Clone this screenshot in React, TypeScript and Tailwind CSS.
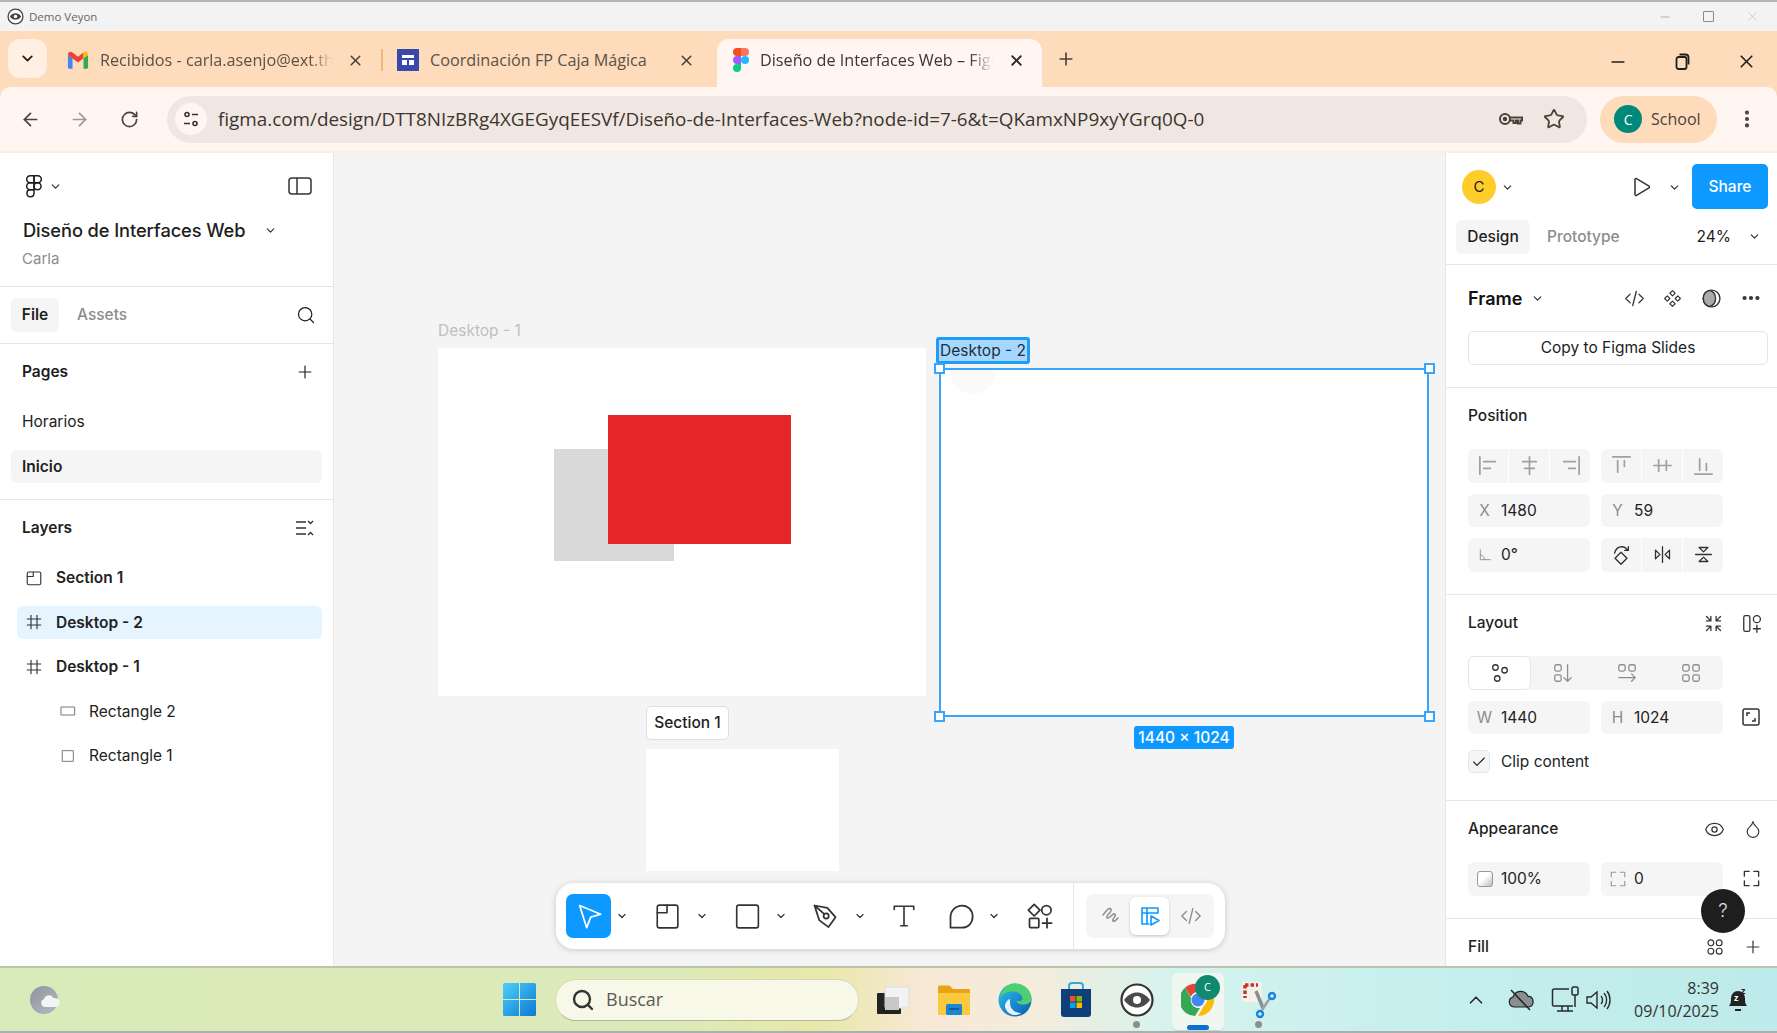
import React from "react";
import { ArrowLeft, ArrowRight, ChevronDown, ChevronUp, EllipsisVertical, Plus, RotateCw, Search, Star, X, Minus, Check, Eye, Droplet, Ellipsis } from "lucide-react";

const inter = "font-['Inter',sans-serif]";
const chrome = "font-['Open_Sans','Noto_Sans',sans-serif]";

type IcoProps = { size?: number; className?: string; sw?: number; children: React.ReactNode };

function Ico({ size = 24, className = "", sw = 1.5, children }: IcoProps) {
  return (
    <svg width={size} height={size} viewBox="0 0 24 24" fill="none" stroke="currentColor" strokeWidth={sw} strokeLinecap="round" strokeLinejoin="round" className={`shrink-0 ${className}`}>
      {children}
    </svg>
  );
}

function Caret({ className = "" }: { className?: string }) {
  return <ChevronDown size={13} strokeWidth={2.2} className={`shrink-0 text-[#333] ${className}`} />;
}

function GmailIcon() {
  return (
    <svg width="22" height="22" viewBox="0 0 24 24" className="shrink-0">
      <path d="M1 6.5V20a1.5 1.5 0 0 0 1.5 1.5H6V10z" fill="#4285f4" />
      <path d="M23 6.5V20a1.5 1.5 0 0 1-1.5 1.5H18V10z" fill="#34a853" />
      <path d="M1 6.5C1 3.5 4 2.2 6 3.8l6 4.7 6-4.7V10l-6 4.6L1 6.5z" fill="#ea4335" />
      <path d="M18 3.8c2-1.6 5-.3 5 2.7L18 10z" fill="#fbbc04" />
    </svg>
  );
}

function CalendarIcon() {
  return (
    <svg width="22" height="22" viewBox="0 0 22 22" className="shrink-0">
      <rect width="22" height="22" fill="#3949ab" />
      <rect x="5" y="6" width="12" height="3" fill="#fff" />
      <rect x="5" y="11" width="5" height="5" fill="#fff" />
      <rect x="12" y="11" width="5" height="5" fill="#fff" />
    </svg>
  );
}

function FigmaColor() {
  return (
    <svg width="16" height="24" viewBox="0 0 16 24" className="shrink-0">
      <path d="M8 0H4a4 4 0 0 0 0 8h4z" fill="#f24e1e" />
      <path d="M8 0h4a4 4 0 0 1 0 8H8z" fill="#ff7262" />
      <path d="M8 8H4a4 4 0 0 0 0 8h4z" fill="#a259ff" />
      <circle cx="12" cy="12" r="4" fill="#1abcfe" />
      <path d="M8 16H4a4 4 0 1 0 4 4z" fill="#0acf83" />
    </svg>
  );
}

function FigmaOutline() {
  return (
    <Ico size={26} sw={1.4}>
      <path d="M8.5 2.5H12v6.5H8.5a3.25 3.25 0 0 1 0-6.500z" />
      <path d="M12 2.500h3.500a3.250 3.250 0 0 1 0 6.500H12z" />
      <path d="M8.500 9H12v6.500H8.500a3.250 3.250 0 0 1 0-6.500z" />
      <circle cx="15.250" cy="12.250" r="3.250" />
      <path d="M8.500 15.500H12v3.250a3.250 3.250 0 1 1-3.500-3.250z" />
    </Ico>
  );
}

function Tab({ icon, title, active, width }: { icon: React.ReactNode; title: string; active?: boolean; width: string }) {
  return (
    <div className={`relative flex h-[48px] items-center pb-[6px] ${width} ${active ? "rounded-t-[12px] bg-[#fff6f2] pl-[16px]" : "pl-[20px]"}`}>
      {icon}
      <span className={`ml-[11px] w-[233px] overflow-hidden whitespace-nowrap text-[16.200px] [mask-image:linear-gradient(to_right,black_90%,transparent)] ${active ? "text-[#3d3530]" : "text-[#5c5148]"}`}>{title}</span>
    </div>
  );
}

function TitleBar() {
  return (
    <div className={`flex h-[31px] items-center border-t-2 border-[#b5b5b5] bg-[#f3f3f3] pl-[7px] pr-[17px] ${chrome}`}>
      <svg width="17" height="17" viewBox="0 0 24 24" className="shrink-0">
        <circle cx="12" cy="12" r="10.500" fill="#fff" stroke="#444" strokeWidth="1.800" />
        <path d="M4 12c4-6 12-6 16 0-4 6-12 6-16 0z" fill="#444" />
        <circle cx="12" cy="12" r="2.500" fill="#fff" />
      </svg>
      <span className="ml-[5px] text-[11.500px] text-[#666]">Demo Veyon</span>
      <div className="ml-auto flex items-center gap-[31px] text-[#9a9a9a]">
        <Minus size={14} strokeWidth={1.2} />
        <div className="h-[11px] w-[11px] rounded-[1px] border border-[#888]" />
        <X size={15} strokeWidth={1} className="text-[#bbb]" />
      </div>
    </div>
  );
}

function TabStrip() {
  return (
    <div className={`flex h-[56px] items-end bg-[#fddbbb] pl-[8px] ${chrome}`}>
      <div className="mb-[9px] flex h-[39px] w-[39px] items-center justify-center rounded-[12px] bg-[#fff0e3]">
        <ChevronDown size={17} strokeWidth={2.6} className="text-[#222]" />
      </div>
      <div className="relative flex w-[335px] items-center">
        <Tab icon={<GmailIcon />} title="Recibidos - carla.asenjo@ext.the" width="w-[335px]" />
        <X size={17} strokeWidth={2.2} className="absolute left-[300px] top-[13px] text-[#4d423a]" />
        <div className="absolute left-[334px] top-[10px] h-[22px] w-[2px] bg-[#f0b67c]" />
      </div>
      <div className="relative flex w-[335px] items-center">
        <div className="relative flex h-[48px] items-center pb-[6px] pl-[15px]">
          <CalendarIcon />
          <span className="ml-[11px] whitespace-nowrap text-[16.200px] text-[#5c5148]">Coordinación FP Caja Mágica</span>
        </div>
        <X size={17} strokeWidth={2.2} className="absolute left-[296px] top-[13px] text-[#4d423a]" />
      </div>
      <div className="relative">
        <Tab active icon={<FigmaColor />} title="Diseño de Interfaces Web – Figma" width="w-[325px]" />
        <X size={17} strokeWidth={2.6} className="absolute left-[291px] top-[13px] text-[#2a2a2a]" />
      </div>
      <Plus size={20} strokeWidth={2} className="mb-[18px] ml-[14px] text-[#4d423a]" />
      <div className="mb-[15px] ml-auto flex items-center gap-[44px] pr-[20px] text-[#1e1e1e]">
        <Minus size={20} strokeWidth={2} />
        <svg width="20" height="20" viewBox="0 0 20 20" fill="none" stroke="currentColor" strokeWidth="1.800">
          <rect x="4.500" y="5" width="10" height="12" rx="2" />
          <path d="M7.500 2.500h6a3 3 0 0 1 3 3v7" />
        </svg>
        <X size={21} strokeWidth={1.9} />
      </div>
    </div>
  );
}

function AddressBar() {
  return (
    <div className={`flex h-[64px] items-center rounded-tl-[10px] rounded-tr-[10px] bg-[#fff6f2] pl-[20px] pr-[19px] ${chrome}`}>
      <ArrowLeft size={21} strokeWidth={2} className="text-[#4d423a]" />
      <ArrowRight size={21} strokeWidth={2} className="ml-[28px] text-[#a39890]" />
      <RotateCw size={19} strokeWidth={2.1} className="ml-[30px] text-[#4d423a]" />
      <div className="ml-[28px] flex h-[47px] w-[1421px] items-center rounded-full bg-[#f0e7e2] pl-[8px] pr-[22px]">
        <div className="flex h-[32px] w-[32px] items-center justify-center rounded-full bg-[#fff6f2]">
          <svg width="18" height="18" viewBox="0 0 18 18" fill="none" stroke="#3a322c" strokeWidth="1.600">
            <circle cx="5" cy="4.500" r="2" />
            <path d="M10 4.500h6M2 13.500h6" />
            <circle cx="13" cy="13.500" r="2" />
          </svg>
        </div>
        <span className="ml-[11px] whitespace-nowrap text-[18.870px] text-[#3d3530]">figma.com/design/DTT8NIzBRg4XGEGyqEESVf/Diseño-de-Interfaces-Web?node-id=7-6&amp;t=QKamxNP9xyYGrq0Q-0</span>
        <div className="ml-auto flex items-center gap-[19px] text-[#4d423a]">
          <svg width="26" height="22" viewBox="0 0 26 22" fill="none" stroke="currentColor" strokeWidth="2">
            <circle cx="7" cy="11" r="5" />
            <circle cx="7" cy="11" r="1.200" fill="currentColor" />
            <path d="M12 9.500h12v3h-1.500v3h-2.500v-3h-2v2.500h-2.500v-2.500H12" />
          </svg>
          <Star size={22} strokeWidth={2} />
        </div>
      </div>
      <div className="ml-[13px] flex h-[47px] w-[117px] items-center rounded-full bg-[#fddbbb] pl-[14px]">
        <div className="flex h-[28px] w-[28px] items-center justify-center rounded-full bg-[#00897b] text-[14px] text-white">C</div>
        <span className="ml-[9px] text-[16px] text-[#4d423a]">School</span>
      </div>
      <EllipsisVertical size={22} strokeWidth={2.6} className="ml-[19px] text-[#4d423a]" />
    </div>
  );
}

function LayerRow({ icon, label, active, indent }: { icon: React.ReactNode; label: string; active?: boolean; indent?: boolean }) {
  return (
    <div className={`mx-[11px] mb-[11px] ml-[17px] flex h-[33.500px] items-center rounded-[6px] ${active ? "bg-[#e5f4ff]" : ""} ${indent ? "pl-[39px]" : "pl-[5px]"}`}>
      <span className="flex w-[24px] justify-center text-[#333]">{icon}</span>
      <span className={`text-[15.500px] text-[#222] ${indent ? "ml-[9px] font-normal" : "ml-[10px] font-semibold"}`}>{label}</span>
    </div>
  );
}

function LeftPanel() {
  return (
    <div className={`flex w-[334px] shrink-0 flex-col border-r border-[#e6e6e6] bg-white text-[#1e1e1e] ${inter}`}>
      <div className="h-[134px] shrink-0 border-b border-[#e6e6e6] pl-[21px] pr-[21px] pt-[20px]">
        <div className="flex items-center">
          <FigmaOutline />
          <Caret className="ml-[2px]" />
          <svg width="24" height="18" viewBox="0 0 24 18" fill="none" stroke="#333" strokeWidth="1.500" className="ml-auto">
            <rect x="1" y="1" width="22" height="16" rx="3" />
            <path d="M9 1v16" />
          </svg>
        </div>
        <div className="mt-[18px] flex items-center pl-[2px]">
          <span className="text-[18.300px] font-medium tracking-[-0.1px]">Diseño de Interfaces Web</span>
          <Caret className="ml-[19px]" />
        </div>
        <div className="mt-[4px] pl-[1px] text-[15px] text-[#8c8c8c]">Carla</div>
      </div>
      <div className="flex h-[57px] shrink-0 items-center border-b border-[#e6e6e6] pl-[11px] pr-[17px]">
        <div className="flex h-[33.500px] w-[48px] items-center justify-center rounded-[6px] bg-[#f5f5f5] text-[15.500px] font-semibold">File</div>
        <span className="ml-[18px] text-[15.500px] font-medium text-[#8c8c8c]">Assets</span>
        <Search size={20} strokeWidth={1.5} className="ml-auto" />
      </div>
      <div className="h-[156px] shrink-0 border-b border-[#e6e6e6] pt-[16px]">
        <div className="flex h-[24px] items-center pl-[22px] pr-[18px]">
          <span className="text-[15.500px] font-semibold">Pages</span>
          <Plus size={20} strokeWidth={1.4} className="ml-auto" />
        </div>
        <div className="mt-[21px] flex h-[33.500px] items-center pl-[22px] text-[15.500px] text-[#222]">Horarios</div>
        <div className="ml-[11px] mr-[11px] mt-[11px] flex h-[33.500px] items-center rounded-[6px] bg-[#f5f5f5] pl-[11px] text-[15.500px] font-semibold">Inicio</div>
      </div>
      <div className="min-h-0 flex-1 overflow-hidden pt-[16px]">
        <div className="flex h-[24px] items-center pl-[22px] pr-[18px]">
          <span className="text-[15.500px] font-semibold">Layers</span>
          <svg width="20" height="20" viewBox="0 0 20 20" fill="none" stroke="#333" strokeWidth="1.400" className="ml-auto">
            <path d="M1 4h10M1 10h10M1 16h10M13 3l2.500 2.500L18 3M13 17l2.500-2.500L18 17" />
          </svg>
        </div>
        <div className="mt-[21px]">
          <LayerRow label="Section 1" icon={<Ico size={18}><rect x="3" y="4" width="18" height="17" rx="2" /><path d="M3 10h8V4" /></Ico>} />
          <LayerRow active label="Desktop - 2" icon={<Ico size={18}><path d="M8 3v18M16 3v18M3 8h18M3 16h18" /></Ico>} />
          <LayerRow label="Desktop - 1" icon={<Ico size={18}><path d="M8 3v18M16 3v18M3 8h18M3 16h18" /></Ico>} />
          <LayerRow indent label="Rectangle 2" icon={<Ico size={16} className="text-[#777]"><rect x="2" y="6" width="20" height="12" /></Ico>} />
          <LayerRow indent label="Rectangle 1" icon={<Ico size={16} className="text-[#777]"><rect x="4" y="4" width="16" height="16" /></Ico>} />
        </div>
      </div>
    </div>
  );
}

function Handle({ className }: { className: string }) {
  return <div className={`absolute h-[11px] w-[11px] border-2 border-[#38a5fb] bg-white ${className}`} />;
}

function ToolCaret({ className = "" }: { className?: string }) {
  return <ChevronDown size={12} strokeWidth={2.4} className={`shrink-0 text-[#333] ${className}`} />;
}

function Toolbar() {
  return (
    <div className="absolute left-[222px] top-[730px] flex h-[66px] w-[669px] items-center rounded-[18px] bg-white pl-[10px] shadow-[0_1px_6px_rgba(0,0,0,0.18)]">
      <div className="flex h-[44px] w-[45px] shrink-0 items-center justify-center rounded-[7px] bg-[#0d99ff] text-white">
        <Ico size={28} sw={1.500}><path d="M4 3l18 7.500-8.500 2.500L10 22z" /></Ico>
      </div>
      <ToolCaret className="ml-[5px]" />
      <Ico size={26} sw={1.500} className="ml-[26px] text-[#333]"><rect x="3" y="2" width="19" height="21" rx="2" /><path d="M3 9h9V2" /></Ico>
      <ToolCaret className="ml-[16px]" />
      <Ico size={26} sw={1.500} className="ml-[26px] text-[#333]"><rect x="2.500" y="2" width="20" height="21" rx="2" /></Ico>
      <ToolCaret className="ml-[15px]" />
      <Ico size={28} sw={1.500} className="ml-[24px] text-[#333]"><path d="M3 3l11 2 7 8-6 8.500-8-6zM3 3l8 7" /><circle cx="13" cy="12" r="2.200" /></Ico>
      <ToolCaret className="ml-[15px]" />
      <Ico size={26} sw={1.500} className="ml-[25px] text-[#333]"><path d="M3 6V3h18v3M12 3v18M9 21h6" /></Ico>
      <Ico size={28} sw={1.500} className="ml-[30px] text-[#333]"><path d="M3 22v-9a10 10 0 0 1 10-10c5 0 9 4 9 9.500S18 22 13 22z" /></Ico>
      <ToolCaret className="ml-[13px]" />
      <Ico size={28} sw={1.500} className="ml-[26px] text-[#333]"><path d="M7 2l5 5-5 5-5-5z" /><circle cx="17.500" cy="7" r="4" /><rect x="3" y="14" width="8" height="8" rx="1" /><path d="M14 18h8M18 14v8" /></Ico>
      <div className="ml-[19px] h-full w-px shrink-0 bg-[#e6e6e6]" />
      <div className="ml-[12px] flex h-[44px] w-[128px] shrink-0 items-center rounded-[8px] bg-[#f5f5f5] pl-[4px]">
        <span className="flex w-[40px] justify-center text-[#8c8c8c]">
          <Ico size={24} sw={1.500}><path d="M5 11c3-4 6-8 8-6s-6 7-4 9 6-6 8-4-4 6-2 7 3-1 5-3" /></Ico>
        </span>
        <div className="flex h-[38px] w-[39px] items-center justify-center rounded-[6px] bg-white text-[#0d99ff] shadow-[0_1px_3px_rgba(0,0,0,0.2)]">
          <Ico size={24} sw={1.600}><path d="M4 20V4h16v5M4 9h16M9 4v16M4 20h7" /><path d="M13 12l8 4.500-8 4.500z" /></Ico>
        </div>
        <span className="flex w-[44px] justify-center text-[#8c8c8c]">
          <Ico size={22} sw={1.500}><path d="M7 7l-5 5 5 5M17 7l5 5-5 5M14 4l-4 16" /></Ico>
        </span>
      </div>
    </div>
  );
}

function Canvas() {
  return (
    <div className={`relative min-w-0 flex-1 overflow-hidden bg-[#f4f4f4] ${inter}`}>
      <div className="absolute left-[104px] top-[166px] text-[15.500px] text-[#c0c0c0]">Desktop - 1</div>
      <div className="absolute left-[104px] top-[195px] h-[348px] w-[488px] bg-white" />
      <div className="absolute left-[220px] top-[296px] h-[112px] w-[120px] bg-[#d9d9d9]" />
      <div className="absolute left-[274px] top-[262px] h-[129px] w-[183px] bg-[#e62626]" />

      <div className="absolute left-[312px] top-[553px] flex h-[34px] w-[83px] items-center justify-center rounded-[5px] border border-[#dedede] bg-white text-[15.500px] font-medium text-[#222]">Section 1</div>
      <div className="absolute left-[312px] top-[596px] h-[122px] w-[193px] bg-white" />

      <div className="absolute left-[602px] top-[184px] flex h-[27px] w-[94px] items-center justify-center rounded-[3px] border-[3px] border-[#1f9cf4] bg-white">
        <span className="bg-[#a6d8ff] px-[1px] text-[15.500px] leading-[21px] text-[#1f2d3a]">Desktop - 2</span>
      </div>
      <div className="absolute left-[605px] top-[215px] h-[349px] w-[490px] overflow-hidden border-2 border-[#38a5fb] bg-white">
        <div className="absolute left-[9px] top-[-24px] h-[48px] w-[46px] rounded-full bg-[#fafafa]" />
      </div>
      <Handle className="left-[600px] top-[210px]" />
      <Handle className="left-[1090px] top-[210px]" />
      <Handle className="left-[600px] top-[558px]" />
      <Handle className="left-[1090px] top-[558px]" />
      <div className="absolute left-[800px] top-[573px] flex h-[23px] w-[100px] items-center justify-center rounded-[3px] bg-[#0d99ff] text-[15.500px] font-medium text-white">1440 × 1024</div>
      <Toolbar />
    </div>
  );
}

function Section({ title, height, children, right, last }: { title: string; height: string; children?: React.ReactNode; right?: React.ReactNode; last?: boolean }) {
  return (
    <div className={`${height} shrink-0 pl-[22px] pr-[9px] pt-[16px] ${last ? "" : "border-b border-[#e6e6e6]"}`}>
      <div className="flex h-[24px] items-center pr-[5px]">
        <span className="text-[15.500px] font-medium text-[#1e1e1e]">{title}</span>
        {right && <div className="ml-auto flex items-center gap-[18px] text-[#333]">{right}</div>}
      </div>
      {children}
    </div>
  );
}

function Field({ label, value, gray = true }: { label: React.ReactNode; value: string; gray?: boolean }) {
  return (
    <div className="flex h-[33.500px] w-[122px] items-center rounded-[6px] bg-[#f5f5f5]">
      <span className={`flex w-[33px] justify-center text-[15.500px] ${gray ? "text-[#8c8c8c]" : ""}`}>{label}</span>
      <span className="text-[15.500px] text-[#222]">{value}</span>
    </div>
  );
}

function IconGroup({ items, className = "" }: { items: React.ReactNode[]; className?: string }) {
  return (
    <div className="flex h-[33.500px] w-[122px] overflow-hidden rounded-[6px] bg-[#f5f5f5]">
      {items.map((it, i) => (
        <div key={i} className={`flex flex-1 items-center justify-center ${i > 0 ? "border-l border-white" : ""} ${className}`}>{it}</div>
      ))}
    </div>
  );
}

function RightPanel() {
  const a = { size: 23, sw: 1.800 };
  return (
    <div className={`relative flex w-[332px] shrink-0 flex-col overflow-hidden border-l border-[#e6e6e6] bg-white ${inter}`}>
      <div className="h-[112px] shrink-0 border-b border-[#e6e6e6] pr-[9px]">
        <div className="flex h-[56px] items-end pl-[16px]">
          <div className="mb-[5px] flex h-[34px] w-[34px] items-center justify-center rounded-full bg-[#ffcd29] text-[15px] text-[#222]">C</div>
          <Caret className="mb-[15px] ml-[5px]" />
          <Ico size={24} sw={1.500} className="mb-[10px] ml-auto text-[#333]"><path d="M6 4.500v15a1 1 0 0 0 1.500.8l12.500-7.500a1 1 0 0 0 0-1.600L7.500 3.700A1 1 0 0 0 6 4.500z" /></Ico>
          <Caret className="mb-[15px] ml-[15px]" />
          <div className="ml-[11px] flex h-[45px] w-[76px] items-center justify-center rounded-[5px] bg-[#0d99ff] text-[15.500px] font-medium text-white">Share</div>
        </div>
        <div className="mt-[11px] flex items-center pl-[10px]">
          <div className="flex h-[33.500px] w-[74px] items-center justify-center rounded-[6px] bg-[#f5f5f5] text-[15.500px] font-medium text-[#222]">Design</div>
          <span className="ml-[17px] text-[15.500px] font-medium text-[#8c8c8c]">Prototype</span>
          <span className="ml-auto text-[15.500px] text-[#222]">24%</span>
          <Caret className="ml-[17px] mr-[7px]" />
        </div>
      </div>

      <div className="h-[123px] shrink-0 border-b border-[#e6e6e6] pl-[22px] pr-[9px] pt-[21px]">
        <div className="flex h-[24px] items-center pr-[6px]">
          <span className="text-[18px] font-semibold text-[#111]">Frame</span>
          <Caret className="ml-[9px]" />
          <div className="ml-auto flex items-center gap-[17px] text-[#333]">
            <Ico size={21} sw={1.500}><path d="M7 7l-5 5 5 5M17 7l5 5-5 5M14 4l-4 16" /></Ico>
            <Ico size={21} sw={1.300}><path d="M12 3l3 3-3 3-3-3zM12 15l3 3-3 3-3-3zM6 9l3 3-3 3-3-3zM18 9l3 3-3 3-3-3z" /></Ico>
            <svg width="21" height="21" viewBox="0 0 20 20" stroke="#333" strokeWidth="1.300">
              <circle cx="11" cy="10" r="8" fill="none" />
              <path d="M9 2.300a8 8 0 0 0 0 15.400 8 8 0 0 0 0-15.400z" fill="#aaa" />
            </svg>
            <Ellipsis size={22} strokeWidth={2.6} className="ml-[2px]" />
          </div>
        </div>
        <div className="mt-[21px] flex h-[34px] w-[300px] items-center justify-center rounded-[6px] border border-[#e6e6e6] text-[15.500px] text-[#222]">Copy to Figma Slides</div>
      </div>

      <Section title="Position" height="h-[207px]">
        <div className="mt-[21px] flex flex-col gap-[11px]">
          <div className="flex gap-[11px] text-[#a0a0a0]">
            <IconGroup items={[
              <Ico key="a" {...a}><path d="M3 3v18M7 8h12M7 15h7" /></Ico>,
              <Ico key="b" {...a}><path d="M12 3v18M5 8h14M7 15h10" /></Ico>,
              <Ico key="c" {...a}><path d="M21 3v18M5 8h12M10 15h7" /></Ico>,
            ]} />
            <IconGroup items={[
              <Ico key="a" {...a}><path d="M3 3h18M8 7v12M15 7v6" /></Ico>,
              <Ico key="b" {...a}><path d="M3 12h18M8 6v12M16 7v10" /></Ico>,
              <Ico key="c" {...a}><path d="M3 21h18M8 5v12M15 10v7" /></Ico>,
            ]} />
          </div>
          <div className="flex gap-[11px]">
            <Field label="X" value="1480" />
            <Field label="Y" value="59" />
          </div>
          <div className="flex gap-[11px]">
            <Field label={<Ico size={14} sw={1.500}><path d="M4 3v17h17M4 12c4 0 7 3 7 8" /></Ico>} value="0°" />
            <IconGroup className="text-[#333]" items={[
              <Ico key="a" size={22} sw={1.500}><path d="M12 9l6.500 6.500L12 22l-6.500-6.500zM5 10c1-4 4-7 8-7s5 2 6 4M20 3v4h-4" /></Ico>,
              <Ico key="b" size={21} sw={1.500}><path d="M12 3v18M4 7v10l5-5zM20 7v10l-5-5z" /></Ico>,
              <Ico key="c" size={21} sw={1.500}><path d="M3 12h18M7 4h10l-5 5zM7 20h10l-5-5z" /></Ico>,
            ]} />
          </div>
        </div>
      </Section>

      <Section title="Layout" height="h-[206px]" right={<>
        <Ico size={21} sw={1.500}><path d="M9 4v5H4M4 4l5 5M15 4v5h5M20 4l-5 5M9 20v-5H4M4 20l5-5M15 20v-5h5M20 20l-5-5" /></Ico>
        <Ico size={21} sw={1.500}><rect x="2" y="3" width="7" height="18" rx="2" /><circle cx="17" cy="7" r="4" /><path d="M17 14v8M13 18h8" /></Ico>
      </>}>
        <div className="mt-[21px] flex h-[33.500px] w-[255px] rounded-[6px] bg-[#f5f5f5] text-[#8c8c8c]">
          <div className="flex w-[63px] items-center justify-center rounded-[6px] border border-[#e6e6e6] bg-white text-[#333]">
            <Ico size={22} sw={1.400}><circle cx="7" cy="6" r="3" /><circle cx="17" cy="9" r="3" /><circle cx="9" cy="18" r="3" /></Ico>
          </div>
          <div className="flex w-[64px] items-center justify-center">
            <Ico size={22} sw={1.400}><rect x="3" y="3" width="7" height="7" rx="2" /><rect x="3" y="14" width="7" height="7" rx="2" /><path d="M17 3v18M13 17l4 4 4-4" /></Ico>
          </div>
          <div className="flex w-[64px] items-center justify-center">
            <Ico size={22} sw={1.400}><rect x="3" y="3" width="7" height="7" rx="2" /><rect x="14" y="3" width="7" height="7" rx="2" /><path d="M3 17h18M17 13l4 4-4 4" /></Ico>
          </div>
          <div className="flex w-[64px] items-center justify-center">
            <Ico size={22} sw={1.400}><rect x="3" y="3" width="7" height="7" rx="2" /><rect x="14" y="3" width="7" height="7" rx="2" /><rect x="3" y="14" width="7" height="7" rx="2" /><rect x="14" y="14" width="7" height="7" rx="2" /></Ico>
          </div>
        </div>
        <div className="mt-[11px] flex items-center gap-[11px]">
          <Field label="W" value="1440" />
          <Field label="H" value="1024" />
          <svg width="18" height="18" viewBox="0 0 18 18" fill="none" stroke="#333" strokeWidth="1.500" className="ml-[8px]">
            <rect x="1" y="1" width="16" height="16" rx="2" />
            <path d="M5 8V5h3M13 10v3h-3" />
          </svg>
        </div>
        <div className="mt-[16px] flex items-center">
          <div className="flex h-[23px] w-[22px] items-center justify-center rounded-[5px] border border-[#e6e6e6] bg-[#f5f5f5]">
            <Check size={16} strokeWidth={1.700} className="text-[#222]" />
          </div>
          <span className="ml-[11px] text-[15.500px] text-[#222]">Clip content</span>
        </div>
      </Section>

      <Section title="Appearance" height="h-[118px]" right={<>
        <Eye size={21} strokeWidth={1.400} />
        <Droplet size={20} strokeWidth={1.400} />
      </>}>
        <div className="mt-[21px] flex items-center gap-[11px]">
          <Field gray={false} label={<span className="h-[16px] w-[16px] rounded-[3px] border border-[#999] bg-[linear-gradient(135deg,#fff_45%,#bbb)]" />} value="100%" />
          <Field gray={false} label={<Ico size={18} sw={1.500} className="text-[#999]"><path d="M9 3H3v6M15 3h6v6M9 21H3v-6M15 21h6v-6" /></Ico>} value="0" />
          <Ico size={19} sw={1.700} className="ml-[8px] text-[#333]"><path d="M9 3H3v6M15 3h6v6M9 21H3v-6M15 21h6v-6" /></Ico>
        </div>
      </Section>

      <Section title="Fill" height="h-[48px]" last right={<>
        <Ico size={20} sw={1.400}><circle cx="7" cy="7" r="3.500" /><circle cx="17" cy="7" r="3.500" /><circle cx="7" cy="17" r="3.500" /><circle cx="17" cy="17" r="3.500" /></Ico>
        <Plus size={20} strokeWidth={1.400} />
      </>} />

      <div className="absolute left-[255px] top-[736px] flex h-[44px] w-[44px] items-center justify-center rounded-full bg-[#1e1e1e] text-[19px] font-light text-[#ddd]">?</div>
    </div>
  );
}

function Tray({ children, className = "" }: { children: React.ReactNode; className?: string }) {
  return <div className={`relative flex h-full w-[61px] shrink-0 items-center justify-center ${className}`}>{children}</div>;
}

function Taskbar() {
  return (
    <div className={`flex h-[67px] shrink-0 items-center border-y-2 border-t-[#bcc4ac] border-b-[#a8b0b0] bg-[linear-gradient(90deg,#d9ebba_0%,#dceab8_38%,#e8e8a8_46%,#f8e8d6_52%,#f4ecdc_58%,#d5f3ee_66%,#c6efee_80%,#bdeaea_100%)] ${chrome}`}>
      <svg width="32" height="32" viewBox="0 0 32 32" className="ml-[29px] shrink-0">
        <defs>
          <linearGradient id="wx" x1="0" y1="0" x2="1" y2="1">
            <stop offset="0" stopColor="#8d929c" />
            <stop offset="1" stopColor="#b6bac2" />
          </linearGradient>
        </defs>
        <circle cx="15" cy="16" r="14" fill="url(#wx)" />
        <path d="M16 23a4 4 0 0 1-1-7.800 5 5 0 0 1 9.500-1 4.500 4.500 0 0 1 3 8.800z" fill="#f2f4f6" />
      </svg>
      <svg width="33" height="33" viewBox="0 0 33 33" className="ml-[442px] shrink-0">
        <defs>
          <linearGradient id="win" x1="0" y1="0" x2="1" y2="1">
            <stop offset="0" stopColor="#4fd0fb" />
            <stop offset="1" stopColor="#0a78d4" />
          </linearGradient>
        </defs>
        <path d="M0 1.500A1.500 1.500 0 0 1 1.500 0H16v16H0zM17 0h14.500A1.500 1.500 0 0 1 33 1.500V16H17zM0 17h16v16H1.500A1.500 1.500 0 0 1 0 31.500zM17 17h16v14.500a1.500 1.500 0 0 1-1.500 1.500H17z" fill="url(#win)" />
      </svg>
      <div className="ml-[19px] flex h-[42px] w-[304px] shrink-0 items-center rounded-full border border-[#d6d9b4] border-b-[#b5b89a] bg-[#f7f8e8] pl-[15px]">
        <Search size={24} strokeWidth={2.4} className="text-[#333]" />
        <span className="ml-[11px] text-[18px] text-[#5c5c54]">Buscar</span>
      </div>
      <div className="ml-[3px] flex h-full">
        <Tray>
          <svg width="34" height="30" viewBox="0 0 34 30">
            <rect x="1" y="8" width="24" height="21" rx="1" fill="#222" />
            <rect x="9" y="2" width="24" height="21" rx="1" fill="#f2f2f2" stroke="#ddd" />
            <rect x="9" y="12" width="14" height="13" fill="#c8c8c8" />
          </svg>
        </Tray>
        <Tray>
          <svg width="34" height="32" viewBox="0 0 34 32">
            <path d="M1 3a1.500 1.500 0 0 1 1.500-1.500h10L16 5h16a1 1 0 0 1 1 1v4H1z" fill="#e8a317" />
            <path d="M1 9h32v21a1 1 0 0 1-1 1H2a1 1 0 0 1-1-1z" fill="#fbc93d" />
            <rect x="9" y="20" width="16" height="11" rx="1.500" fill="#1b86d6" />
            <rect x="12" y="24" width="10" height="2" fill="#0b5c9e" />
          </svg>
        </Tray>
        <Tray>
          <svg width="34" height="34" viewBox="0 0 34 34">
            <defs>
              <linearGradient id="edge" x1="0" y1="0" x2="1" y2="1">
                <stop offset="0" stopColor="#2fc5d8" />
                <stop offset="0.500" stopColor="#1a8fd6" />
                <stop offset="1" stopColor="#0c59a4" />
              </linearGradient>
            </defs>
            <circle cx="17" cy="17" r="16.500" fill="url(#edge)" />
            <path d="M17 .500c9 0 16.500 7 16.500 15 0 4-3.500 6-8 6-5 0-7-2-7-4 2 1 6 1 6-2 0-4-5-7-9.500-7C9 8.500 4 11 2 15 3 7 9 .500 17 .500z" fill="#4fcf74" />
            <path d="M12 20c0 6 5 10 11 10-3 3-13 4-16-6 0-4 2-7 5-8z" fill="#fff" opacity=".9" />
          </svg>
        </Tray>
        <Tray>
          <svg width="32" height="36" viewBox="0 0 32 36">
            <path d="M9 7V4a3 3 0 0 1 3-3h8a3 3 0 0 1 3 3v3" fill="none" stroke="#3aa5dc" strokeWidth="2" />
            <path d="M1 7h30v25a3 3 0 0 1-3 3H4a3 3 0 0 1-3-3z" fill="#0f3f78" />
            <rect x="10" y="14" width="5.500" height="5.500" fill="#f25022" />
            <rect x="16.500" y="14" width="5.500" height="5.500" fill="#7fba00" />
            <rect x="10" y="20.500" width="5.500" height="5.500" fill="#00a4ef" />
            <rect x="16.500" y="20.500" width="5.500" height="5.500" fill="#ffb900" />
          </svg>
        </Tray>
        <Tray>
          <svg width="34" height="34" viewBox="0 0 34 34">
            <circle cx="17" cy="17" r="15.500" fill="#fff" stroke="#333" strokeWidth="2.200" />
            <path d="M4 17c7-10 19-10 26 0-7 10-19 10-26 0z" fill="#4a4a4a" />
            <circle cx="17" cy="17" r="4" fill="#fff" />
          </svg>
          <div className="absolute bottom-[3px] h-[7px] w-[7px] rounded-full bg-[#8d8d8d]" />
        </Tray>
        <Tray>
          <div className="absolute bottom-[1px] top-[5px] w-[52px] rounded-[5px] bg-[#f0f6f0] shadow-[0_1px_1px_rgba(0,0,0,0.1)]" />
          <svg width="34" height="34" viewBox="0 0 34 34" className="relative">
            <path d="M17 1a16 16 0 0 1 13.900 8H17a8 8 0 0 0-7.300 4.700L4 4.800A16 16 0 0 1 17 1z" fill="#ea4335" />
            <path d="M30.900 9A16 16 0 0 1 17 33l5.800-10A8 8 0 0 0 24 11z" fill="#fbbc04" />
            <path d="M4 4.800L10 15a8 8 0 0 0 9 10l-5 8A16 16 0 0 1 4 4.800z" fill="#34a853" />
            <circle cx="17" cy="17" r="6.500" fill="#4285f4" />
          </svg>
          <div className="absolute left-[28px] top-[7px] flex h-[25px] w-[25px] items-center justify-center rounded-full bg-[#0f8a70] text-[11px] text-white">C</div>
          <div className="absolute bottom-[1px] h-[5px] w-[22px] rounded-full bg-[#0a6fd0]" />
        </Tray>
        <Tray>
          <svg width="36" height="38" viewBox="0 0 36 38" fill="none">
            <rect x="1" y="1" width="20" height="20" rx="2" fill="#f4f0ea" />
            <path d="M4 4h13M4 4v13" stroke="#c0392b" strokeWidth="3.500" strokeDasharray="3.500 2" />
            <path d="M15 10l7 17" stroke="#8a8f95" strokeWidth="3.500" />
            <path d="M29 17l-8 12" stroke="#9aa0a6" strokeWidth="2.500" />
            <circle cx="31" cy="15" r="3" stroke="#1a86d6" strokeWidth="2.400" />
            <circle cx="19" cy="33" r="3" stroke="#1a86d6" strokeWidth="2.400" />
          </svg>
          <div className="absolute bottom-[3px] h-[7px] w-[7px] rounded-full bg-[#8d8d8d]" />
        </Tray>
      </div>
      <div className="ml-auto flex items-center pr-[27px] text-[#2a2a2a]">
        <ChevronUp size={22} strokeWidth={1.800} />
        <svg width="28" height="26" viewBox="0 0 28 26" className="ml-[20px]">
          <path d="M7 20a5 5 0 0 1-1-9.800 8 8 0 0 1 15-1 5.500 5.500 0 0 1 1 10.800z" fill="#8a8f8f" stroke="#222" strokeWidth="1.200" />
          <path d="M4 3l19 20" stroke="#222" strokeWidth="1.500" />
        </svg>
        <svg width="30" height="28" viewBox="0 0 30 28" fill="none" stroke="#2a2a2a" strokeWidth="1.500" className="ml-[16px]">
          <path d="M18 3H3a1.500 1.500 0 0 0-1.500 1.500v14A1.500 1.500 0 0 0 3 20h19M11 20v5M6 25h16M17 20v5" />
          <rect x="21" y="1" width="6" height="8" rx="1.500" />
          <path d="M24 9v12" />
        </svg>
        <svg width="26" height="24" viewBox="0 0 26 24" fill="none" stroke="#2a2a2a" strokeWidth="1.400" className="ml-[4px]">
          <path d="M2 9v6h4l6 5V4L6 9zM16 8c2 2 2 6 0 8M19 5c3.500 4 3.500 10 0 14M22 3c4 5 4 13 0 18" />
        </svg>
        <div className="ml-[23px] flex flex-col items-end text-[16px] leading-[23px] text-[#333]">
          <span>8:39</span>
          <span>09/10/2025</span>
        </div>
        <svg width="24" height="28" viewBox="0 0 24 28" className="ml-[7px]">
          <path d="M3 20c2-2 2-5 2-8a7 7 0 0 1 14 0c0 3 0 6 2 8z" fill="#222" />
          <path d="M9 23h6v2H9z" fill="#222" />
          <text x="8" y="15" fontSize="9" fontWeight="700" fill="#fff">z</text>
          <text x="15" y="8" fontSize="9" fontWeight="700" fill="#222">z</text>
        </svg>
      </div>
    </div>
  );
}

export default function App() {
  return (
    <div className="flex h-[1033px] w-[1777px] flex-col overflow-hidden bg-white">
      <TitleBar />
      <TabStrip />
      <div className="bg-[#fddbbb]"><AddressBar /></div>
      <div className="h-[2px] shrink-0 bg-[#fbeee4]" />
      <div className="flex min-h-0 flex-1">
        <LeftPanel />
        <Canvas />
        <RightPanel />
      </div>
      <Taskbar />
    </div>
  );
}
